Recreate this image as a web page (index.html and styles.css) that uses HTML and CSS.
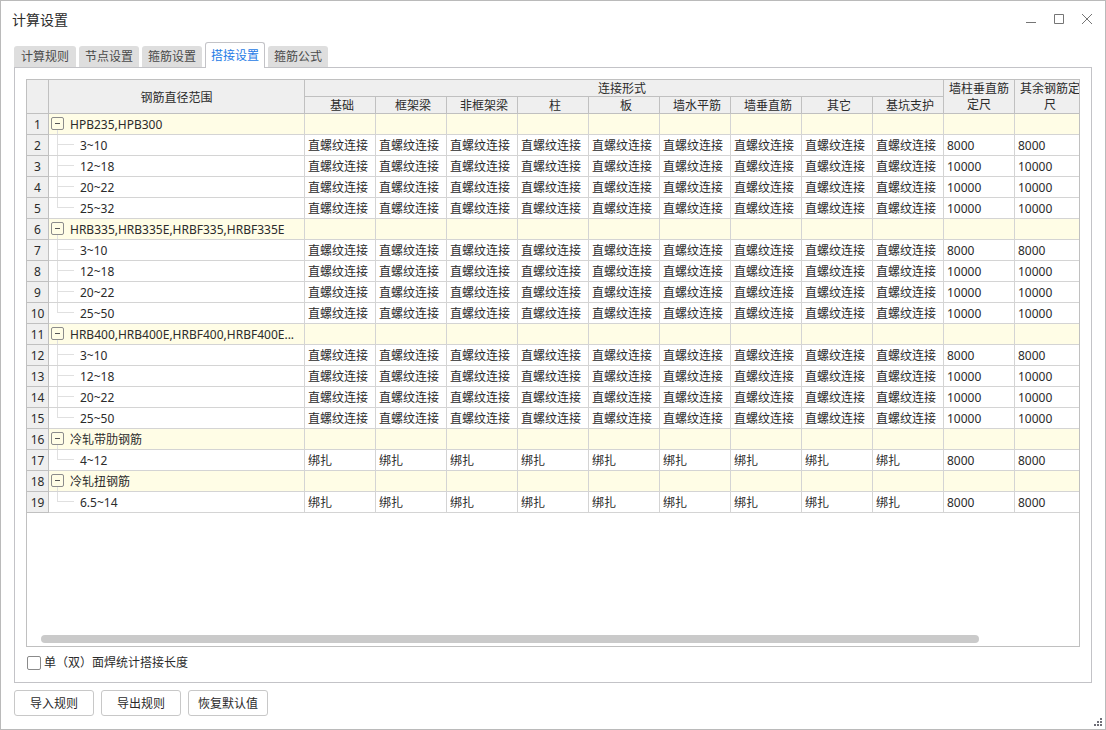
FILE: index.html
```html
<!DOCTYPE html>
<html lang="zh-CN">
<head>
<meta charset="utf-8">
<title>计算设置</title>
<link rel="stylesheet" href="styles.css">
</head>
<body>
<main class="window">
  <header class="titlebar">
    <h1 class="title">计算设置</h1>
    <button class="win-btn" type="button" aria-label="最小化"><svg width="12" height="12" viewBox="0 0 12 12"><path d="M1 8.5H11"/></svg></button>
    <button class="win-btn" type="button" aria-label="最大化"><svg width="12" height="12" viewBox="0 0 12 12"><path d="M1.5 0.5H10.5V9.5H1.5Z"/></svg></button>
    <button class="win-btn" type="button" aria-label="关闭"><svg width="12" height="12" viewBox="0 0 12 12"><path d="M1 0L11 10M11 0L1 10"/></svg></button>
  </header>

  <nav class="tabs" role="tablist">
    <button class="tab" type="button" role="tab">计算规则</button>
    <button class="tab" type="button" role="tab">节点设置</button>
    <button class="tab" type="button" role="tab">箍筋设置</button>
    <button class="tab tab-active" type="button" role="tab" aria-selected="true">搭接设置</button>
    <button class="tab" type="button" role="tab">箍筋公式</button>
  </nav>

  <section class="panel">
    <div class="grid-box">
      <div class="grid-view">
        <table class="grid">
          <colgroup><col class="col-num"><col class="col-range"><col class="col-value" span="11"></colgroup>
          <thead>
            <tr><th rowspan="2"></th><th rowspan="2">钢筋直径范围</th><th class="kind-title" colspan="9">连接形式</th><th class="wrap" rowspan="2">墙柱垂直筋定尺</th><th class="wrap" rowspan="2">其余钢筋定尺</th></tr>
            <tr class="kinds"><th>基础</th><th>框架梁</th><th>非框架梁</th><th>柱</th><th>板</th><th>墙水平筋</th><th>墙垂直筋</th><th>其它</th><th>基坑支护</th></tr>
          </thead>
          <tbody>
            <tr class="group"><th>1</th><td class="node"><button class="toggle" type="button" aria-label="折叠"></button>HPB235,HPB300</td><td></td><td></td><td></td><td></td><td></td><td></td><td></td><td></td><td></td><td></td><td></td></tr>
            <tr><th>2</th><td class="leaf">3~10</td><td>直螺纹连接</td><td>直螺纹连接</td><td>直螺纹连接</td><td>直螺纹连接</td><td>直螺纹连接</td><td>直螺纹连接</td><td>直螺纹连接</td><td>直螺纹连接</td><td>直螺纹连接</td><td>8000</td><td>8000</td></tr>
            <tr><th>3</th><td class="leaf">12~18</td><td>直螺纹连接</td><td>直螺纹连接</td><td>直螺纹连接</td><td>直螺纹连接</td><td>直螺纹连接</td><td>直螺纹连接</td><td>直螺纹连接</td><td>直螺纹连接</td><td>直螺纹连接</td><td>10000</td><td>10000</td></tr>
            <tr><th>4</th><td class="leaf">20~22</td><td>直螺纹连接</td><td>直螺纹连接</td><td>直螺纹连接</td><td>直螺纹连接</td><td>直螺纹连接</td><td>直螺纹连接</td><td>直螺纹连接</td><td>直螺纹连接</td><td>直螺纹连接</td><td>10000</td><td>10000</td></tr>
            <tr><th>5</th><td class="leaf leaf-last">25~32</td><td>直螺纹连接</td><td>直螺纹连接</td><td>直螺纹连接</td><td>直螺纹连接</td><td>直螺纹连接</td><td>直螺纹连接</td><td>直螺纹连接</td><td>直螺纹连接</td><td>直螺纹连接</td><td>10000</td><td>10000</td></tr>
            <tr class="group"><th>6</th><td class="node"><button class="toggle" type="button" aria-label="折叠"></button>HRB335,HRB335E,HRBF335,HRBF335E</td><td></td><td></td><td></td><td></td><td></td><td></td><td></td><td></td><td></td><td></td><td></td></tr>
            <tr><th>7</th><td class="leaf">3~10</td><td>直螺纹连接</td><td>直螺纹连接</td><td>直螺纹连接</td><td>直螺纹连接</td><td>直螺纹连接</td><td>直螺纹连接</td><td>直螺纹连接</td><td>直螺纹连接</td><td>直螺纹连接</td><td>8000</td><td>8000</td></tr>
            <tr><th>8</th><td class="leaf">12~18</td><td>直螺纹连接</td><td>直螺纹连接</td><td>直螺纹连接</td><td>直螺纹连接</td><td>直螺纹连接</td><td>直螺纹连接</td><td>直螺纹连接</td><td>直螺纹连接</td><td>直螺纹连接</td><td>10000</td><td>10000</td></tr>
            <tr><th>9</th><td class="leaf">20~22</td><td>直螺纹连接</td><td>直螺纹连接</td><td>直螺纹连接</td><td>直螺纹连接</td><td>直螺纹连接</td><td>直螺纹连接</td><td>直螺纹连接</td><td>直螺纹连接</td><td>直螺纹连接</td><td>10000</td><td>10000</td></tr>
            <tr><th>10</th><td class="leaf leaf-last">25~50</td><td>直螺纹连接</td><td>直螺纹连接</td><td>直螺纹连接</td><td>直螺纹连接</td><td>直螺纹连接</td><td>直螺纹连接</td><td>直螺纹连接</td><td>直螺纹连接</td><td>直螺纹连接</td><td>10000</td><td>10000</td></tr>
            <tr class="group"><th>11</th><td class="node"><button class="toggle" type="button" aria-label="折叠"></button>HRB400,HRB400E,HRBF400,HRBF400E...</td><td></td><td></td><td></td><td></td><td></td><td></td><td></td><td></td><td></td><td></td><td></td></tr>
            <tr><th>12</th><td class="leaf">3~10</td><td>直螺纹连接</td><td>直螺纹连接</td><td>直螺纹连接</td><td>直螺纹连接</td><td>直螺纹连接</td><td>直螺纹连接</td><td>直螺纹连接</td><td>直螺纹连接</td><td>直螺纹连接</td><td>8000</td><td>8000</td></tr>
            <tr><th>13</th><td class="leaf">12~18</td><td>直螺纹连接</td><td>直螺纹连接</td><td>直螺纹连接</td><td>直螺纹连接</td><td>直螺纹连接</td><td>直螺纹连接</td><td>直螺纹连接</td><td>直螺纹连接</td><td>直螺纹连接</td><td>10000</td><td>10000</td></tr>
            <tr><th>14</th><td class="leaf">20~22</td><td>直螺纹连接</td><td>直螺纹连接</td><td>直螺纹连接</td><td>直螺纹连接</td><td>直螺纹连接</td><td>直螺纹连接</td><td>直螺纹连接</td><td>直螺纹连接</td><td>直螺纹连接</td><td>10000</td><td>10000</td></tr>
            <tr><th>15</th><td class="leaf leaf-last">25~50</td><td>直螺纹连接</td><td>直螺纹连接</td><td>直螺纹连接</td><td>直螺纹连接</td><td>直螺纹连接</td><td>直螺纹连接</td><td>直螺纹连接</td><td>直螺纹连接</td><td>直螺纹连接</td><td>10000</td><td>10000</td></tr>
            <tr class="group"><th>16</th><td class="node"><button class="toggle" type="button" aria-label="折叠"></button>冷轧带肋钢筋</td><td></td><td></td><td></td><td></td><td></td><td></td><td></td><td></td><td></td><td></td><td></td></tr>
            <tr><th>17</th><td class="leaf leaf-last">4~12</td><td>绑扎</td><td>绑扎</td><td>绑扎</td><td>绑扎</td><td>绑扎</td><td>绑扎</td><td>绑扎</td><td>绑扎</td><td>绑扎</td><td>8000</td><td>8000</td></tr>
            <tr class="group"><th>18</th><td class="node"><button class="toggle" type="button" aria-label="折叠"></button>冷轧扭钢筋</td><td></td><td></td><td></td><td></td><td></td><td></td><td></td><td></td><td></td><td></td><td></td></tr>
            <tr><th>19</th><td class="leaf leaf-last">6.5~14</td><td>绑扎</td><td>绑扎</td><td>绑扎</td><td>绑扎</td><td>绑扎</td><td>绑扎</td><td>绑扎</td><td>绑扎</td><td>绑扎</td><td>8000</td><td>8000</td></tr>
          </tbody>
        </table>
      </div>
      <div class="scroll-track"><div class="scroll-thumb"></div></div>
    </div>
    <label class="option"><input class="check" type="checkbox">单（双）面焊统计搭接长度</label>
  </section>

  <footer class="footer">
    <div class="actions">
      <button class="action" type="button">导入规则</button>
      <button class="action" type="button">导出规则</button>
      <button class="action" type="button">恢复默认值</button>
    </div>
    <svg class="grip" width="8" height="8" viewBox="0 0 8 8" aria-hidden="true"><path d="M6 0h2v2H6zM3 3h2v2H3zM6 3h2v2H6zM0 6h2v2H0zM3 6h2v2H3zM6 6h2v2H6z"/></svg>
  </footer>
</main>
</body>
</html>
```

FILE: styles.css
```css
* {
  box-sizing: border-box;
}

body {
  margin: 0;
  background: #fff;
  color: #2b2b2b;
  font: 12px/20px "Noto Sans", "Noto Sans CJK SC", sans-serif;
}

button {
  margin: 0;
  padding: 0;
  color: inherit;
  font: inherit;
}

.window {
  display: flex;
  flex-direction: column;
  min-height: 100vh;
  border: 1px solid #bababa;
}

/* Title bar */
.titlebar {
  display: flex;
  align-items: center;
  gap: 16px;
  height: 37px;
  padding: 0 12px 0 11px;
}

.title {
  flex: 1;
  margin: 0;
  font-size: 14px;
  font-weight: 400;
}

.win-btn {
  display: flex;
  border: 0;
  background: none;
}

.win-btn svg {
  fill: none;
  stroke: #757575;
}

/* Tabs */
.tabs {
  display: flex;
  align-items: flex-end;
  gap: 3px;
  height: 29px;
  padding: 0 13px;
}

.tab {
  height: 21px;
  padding: 0 6px;
  border: 0;
  border-radius: 3px 3px 0 0;
  background: #dedede;
  color: #4a4a4a;
}

.tab:first-child {
  padding: 0 7px;
}

.tab-active {
  z-index: 1;
  height: 26px;
  margin-bottom: -1px;
  padding: 0 5px;
  border: 1px solid #c3c3c7;
  border-bottom: 0;
  background: #fff;
  color: #1e7be6;
}

/* Panel and data grid */
.panel {
  display: flex;
  flex: 1;
  flex-direction: column;
  margin: 0 13px;
  padding: 11px;
  padding-bottom: 9px;
  border: 1px solid #c3c3c7;
}

.grid-box {
  display: flex;
  flex: 1;
  flex-direction: column;
  border: 1px solid #c0c0c0;
}

.grid-view {
  flex: 1;
  width: 100%;
  overflow: hidden;
  contain: inline-size;
}

.grid {
  width: 1059px;
  border-spacing: 0;
  table-layout: fixed;
}

.col-num {
  width: 22px;
}

.col-range {
  width: 256px;
}

.col-value {
  width: 71px;
}

.grid th,
.grid td {
  height: 21px;
  padding: 2px 3px 0;
  border: solid #d4d4d4;
  border-width: 0 1px 1px 0;
  line-height: 18px;
  white-space: nowrap;
}

.grid th {
  padding: 2px 0 0;
  border-color: #c0c0c0;
  background: #efefef;
  font-weight: 400;
}

.grid thead th {
  height: 17px;
  line-height: 14px;
}

.grid .kind-title {
  padding-right: 4px;
}

.grid .kinds th {
  padding-left: 4px;
}

.grid thead .wrap {
  padding: 1px 4px 0;
  line-height: 16px;
  white-space: normal;
}

.grid td {
  overflow: hidden;
}

.group td {
  background-color: #fffde6;
}

/* Tree guide lines are painted as backgrounds of the range cells */
.grid .node {
  padding-left: 2px;
  background-image: linear-gradient(#e0e0e0, #e0e0e0);
  background-position: 8px 16px;
  background-size: 1px 4px;
  background-repeat: no-repeat;
}

.grid .leaf {
  padding-left: 31px;
  background-image: linear-gradient(#e0e0e0, #e0e0e0), linear-gradient(#e0e0e0, #e0e0e0);
  background-position: 8px 0, 8px 9px;
  background-size: 1px 100%, 17px 1px;
  background-repeat: no-repeat;
}

.grid .leaf-last {
  background-size: 1px 10px, 17px 1px;
}

.toggle {
  width: 13px;
  height: 13px;
  margin-right: 6px;
  border: 1px solid #8c8c8c;
  border-radius: 2px;
  background: linear-gradient(#555, #555) center / 5px 1px no-repeat;
  vertical-align: 0;
}

.scroll-track {
  padding: 0 100px 3px 14px;
}

.scroll-thumb {
  height: 8px;
  border-radius: 4px;
  background: #cacaca;
}

.option {
  display: flex;
  align-items: center;
  gap: 3px;
  align-self: flex-start;
  margin-top: 6px;
  padding-left: 1px;
}

.check {
  width: 14px;
  height: 14px;
  margin: 0;
  border: 1px solid #8a8a8a;
  border-radius: 2px;
  background: #fff;
  appearance: none;
}

.check:checked {
  background: #1e7be6;
}

/* Footer */
.footer {
  display: flex;
  align-items: flex-end;
  justify-content: space-between;
  padding: 7px 3px 3px 13px;
}

.actions {
  display: flex;
  gap: 7px;
  padding-bottom: 10px;
}

.action {
  width: 80px;
  height: 26px;
  padding-top: 2px;
  border: 1px solid #c8c8c8;
  border-radius: 3px;
  background: #fff;
}

.grip {
  fill: #6f6f78;
}
```
